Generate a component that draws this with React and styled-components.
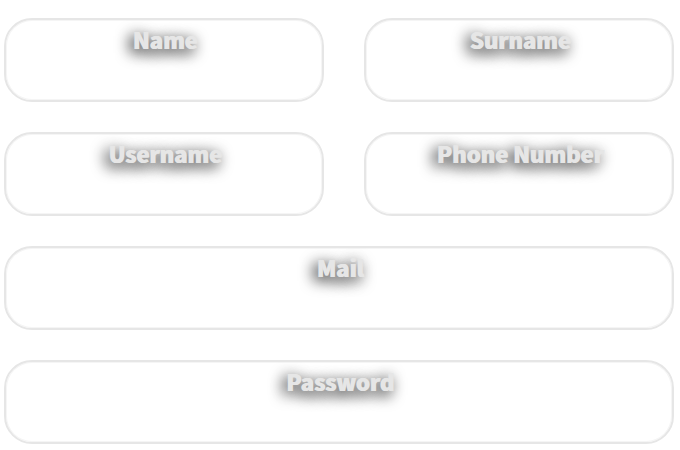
import React, { useId } from "react";
import styled, { createGlobalStyle } from "styled-components";

const Page = createGlobalStyle`
  * { box-sizing: border-box; }
  body {
    margin: 0;
    background: #fff;
    font-family: "Noto Sans CJK SC", "Noto Sans", sans-serif;
  }
`;

const Form = styled.form`
  display: grid;
  grid-template-columns: 320fr 310fr;
  gap: 30px 40px;
  padding: 18px 6px 6px 4px;
`;

const Field = styled.div`
  grid-column: ${(p) => (p.$wide ? "1 / -1" : "auto")};
  min-width: 0;
  height: 84px;
  display: flex;
  flex-direction: column;
  border: 2px solid #e6e6e6;
  border-radius: 28px;
  box-shadow: inset 0 0 0 1px #f5f5f5;
  overflow: hidden;
`;

const Label = styled.label`
  align-self: center;
  padding-left: 2px;
  color: #e6e6e6;
  font-size: 22px;
  font-weight: 900;
  line-height: 39px;
  text-shadow: 1px 0 #e6e6e6, -3px 4px 15px #000, -3px 3px 16px rgba(0, 0, 0, 0.2);
`;

const Input = styled.input`
  flex: 1;
  min-height: 0;
  width: 100%;
  padding: 0 24px;
  border: 0;
  outline: 0;
  background: transparent;
  font: inherit;
  font-size: 20px;
`;

function TextField({ label, type = "text", wide }) {
  const id = useId();
  return (
    <Field $wide={wide}>
      <Label htmlFor={id}>{label}</Label>
      <Input id={id} type={type} />
    </Field>
  );
}

export default function App() {
  return (
    <>
      <Page />
      <Form>
        <TextField label="Name" />
        <TextField label="Surname" />
        <TextField label="Username" />
        <TextField label="Phone Number" type="tel" />
        <TextField label="Mail" type="email" wide />
        <TextField label="Password" type="password" wide />
      </Form>
    </>
  );
}
